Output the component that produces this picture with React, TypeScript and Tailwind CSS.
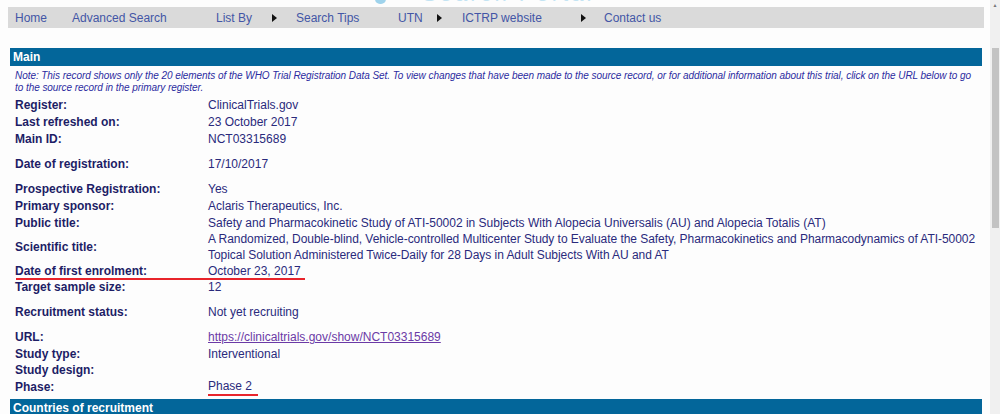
// Trial record page: nav strip, "Main" section and the start of "Countries of recruitment"

import React from "react";

type Row = {
    label: string;
    value?: React.ReactNode;
    h?: string;
    gap?: string;
    underline?: "row" | "value";
};

const Arrow = () => (
    <svg width="5" height="8" viewBox="0 0 5 8" className="inline-block">
        <polygon points="0,0 5,4 0,8" fill="#111" />
    </svg>
);

const rows: Row[] = [
    { label: "Register:", value: "ClinicalTrials.gov" },
    { label: "Last refreshed on:", value: "23 October 2017" },
    { label: "Main ID:", value: "NCT03315689" },
    { label: "Date of registration:", value: "17/10/2017", gap: "mt-[8px]" },
    { label: "Prospective Registration:", value: "Yes", gap: "mt-[8px]" },
    { label: "Primary sponsor:", value: "Aclaris Therapeutics, Inc." },
    {
        label: "Public title:",
        value: "Safety and Pharmacokinetic Study of ATI-50002 in Subjects With Alopecia Universalis (AU) and Alopecia Totalis (AT)",
    },
    {
        label: "Scientific title:",
        value: "A Randomized, Double-blind, Vehicle-controlled Multicenter Study to Evaluate the Safety, Pharmacokinetics and Pharmacodynamics of ATI-50002 Topical Solution Administered Twice-Daily for 28 Days in Adult Subjects With AU and AT",
        h: "sci",
    },
    { label: "Date of first enrolment:", value: "October 23, 2017", h: "h-[16px]", underline: "row" },
    { label: "Target sample size:", value: "12", h: "h-[16px]" },
    { label: "Recruitment status:", value: "Not yet recruiting", gap: "mt-[8px]" },
    {
        label: "URL:",
        value: (
            <a href="#" className="text-[#6b3aa6] underline">
                https://clinicaltrials.gov/show/NCT03315689
            </a>
        ),
        h: "h-[16.5px]",
        gap: "mt-[9px]",
    },
    { label: "Study type:", value: "Interventional", h: "h-[16.5px]" },
    { label: "Study design:", value: "", h: "h-[16.5px]" },
    { label: "Phase:", value: "Phase 2", h: "h-[16.5px]", underline: "value" },
];

const App: React.FC = () => {
    return (
        <div className="w-[1000px] h-[414px] overflow-hidden bg-[#fdfdfd] flex font-['Liberation_Sans',Arial,sans-serif]">
            <div className="w-[990px] pl-[8px]">
                {/* cut-off banner above the nav */}
                <div className="h-[7px] overflow-hidden flex">
                    <div className="ml-[367px] mt-[-6px] w-[11px] h-[10px] rounded-full bg-[#9fd3ec]" />
                    <div className="ml-[36px] mt-[-17px] text-[22px] leading-[22px] text-[#c4e4f3] tracking-[3px]">
                        Search Portal
                    </div>
                </div>

                {/* nav */}
                <div className="w-[976px] h-[21px] bg-[#dadada] flex items-center pl-[7px] pt-[1px] text-[12px] text-[#4356a6]">
                    <div className="w-[57px]">Home</div>
                    <div className="w-[144px]">Advanced Search</div>
                    <div className="w-[80px] flex items-center">
                        <span className="w-[56px]">List By</span>
                        <Arrow />
                    </div>
                    <div className="w-[102px]">Search Tips</div>
                    <div className="w-[64px] flex items-center">
                        <span className="w-[39px]">UTN</span>
                        <Arrow />
                    </div>
                    <div className="w-[142px] flex items-center">
                        <span className="w-[119px]">ICTRP website</span>
                        <Arrow />
                    </div>
                    <div>Contact us</div>
                </div>

                {/* main section */}
                <div className="ml-[2px] mt-[20px] w-[972px]">
                    <div className="h-[18px] bg-[#03669a] text-white font-bold text-[12px] leading-[19px] pl-[3px]">
                        Main
                    </div>
                    <div className="pl-[5px] pr-[1px] pt-[4px] pb-[2px] text-[10px] leading-[12px] italic tracking-[-0.06px] text-[#2b2ba0]">
                        Note: This record shows only the 20 elements of the WHO Trial Registration Data Set. To view changes that have been made to the source record, or for additional information about this trial, click on the URL below to go to the source record in the primary register.
                    </div>

                    <div className="pl-[5px] flex flex-col text-[12px] text-[#2a2a7c]">
                        {rows.map((r) => (
                            <div
                                key={r.label}
                                className={`relative flex items-center shrink-0 ${r.gap ?? ""} ${
                                    r.h === "sci" ? "h-[32px]" : r.h ?? "h-[17px]"
                                }`}
                            >
                                <div className="w-[193px] shrink-0 font-bold text-[#1d1d66]">{r.label}</div>
                                <div className={r.h === "sci" ? "leading-[16px] tracking-[-0.05px]" : ""}>
                                    {r.underline === "value" ? (
                                        <span className="inline-block border-b-2 border-[#e8242b] pr-[6px] leading-[15px]">
                                            {r.value}
                                        </span>
                                    ) : (
                                        r.value
                                    )}
                                </div>
                                {r.underline === "row" && (
                                    <div className="absolute left-[1px] top-[15px] w-[289px] h-[2px] bg-[#e8242b]" />
                                )}
                            </div>
                        ))}
                    </div>

                    <div className="mt-[4px] h-[18px] bg-[#03669a] text-white font-bold text-[12px] leading-[19px] pl-[3px]">
                        Countries of recruitment
                    </div>
                </div>
            </div>

            {/* scrollbar */}
            <div className="w-[10px] h-full bg-[#f0f0f0] flex flex-col items-center">
                <div className="mt-[3px] text-[5px] leading-[5px] text-[#777]">▲</div>
                <div className="mt-[40px] w-[7px] h-[180px] bg-[#c3c3c3]" />
            </div>
        </div>
    );
};

export default App;
